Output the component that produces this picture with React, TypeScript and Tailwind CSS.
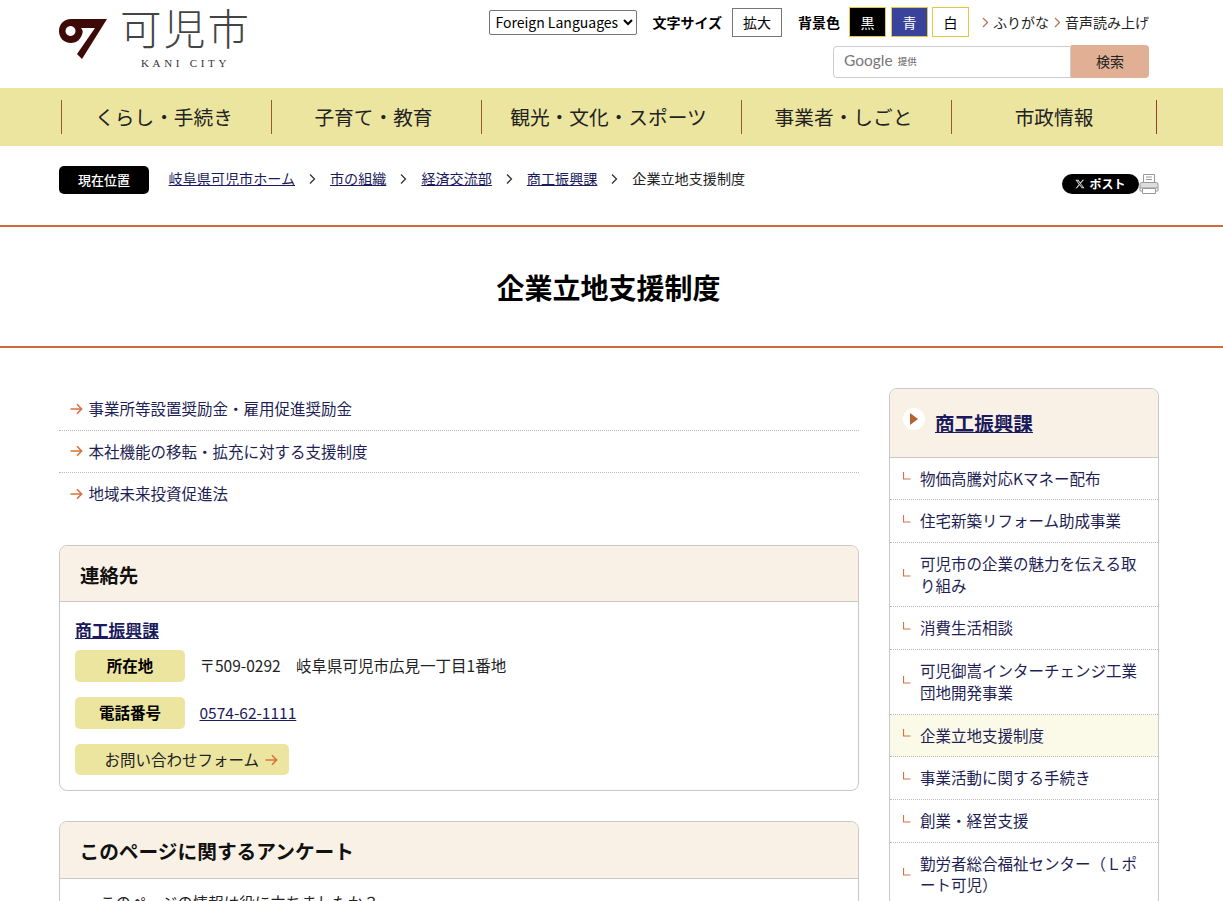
import React from 'react';

const jp = "font-['Noto_Sans_CJK_JP','Noto_Sans',sans-serif]";

const navItems = [
  { label: 'くらし・手続き', width: 'w-[210px] pr-[5px]' },
  { label: '子育て・教育', width: 'w-[210px] pr-[6px]' },
  { label: '観光・文化・スポーツ', width: 'w-[260px] pr-[6px]' },
  { label: '事業者・しごと', width: 'w-[210px] pr-[6px]' },
  { label: '市政情報', width: 'w-[205px]' },
];

const crumbs = ['岐阜県可児市ホーム', '市の組織', '経済交流部', '商工振興課'];

const mainLinks = ['事業所等設置奨励金・雇用促進奨励金', '本社機能の移転・拡充に対する支援制度', '地域未来投資促進法'];

const sideLinks = [
  '物価高騰対応Kマネー配布',
  '住宅新築リフォーム助成事業',
  '可児市の企業の魅力を伝える取り組み',
  '消費生活相談',
  '可児御嵩インターチェンジ工業団地開発事業',
  '企業立地支援制度',
  '事業活動に関する手続き',
  '創業・経営支援',
  '勤労者総合福祉センター（Ｌポート可児）',
];

const Arrow = () => (
  <svg width="13" height="12" viewBox="0 0 13 12" fill="none" stroke="#d9703f" strokeWidth="1.6" className="shrink-0">
    <path d="M0.5 6h11M7 1.2 11.6 6 7 10.8" />
  </svg>
);

const Chevron = () => (
  <svg width="7" height="12" viewBox="0 0 7 12" fill="none" stroke="#333" strokeWidth="1.3" className="shrink-0">
    <path d="M1 1.5 5.5 6 1 10.5" />
  </svg>
);

const SmallChevron = () => (
  <svg width="7" height="11" viewBox="0 0 7 11" fill="none" stroke="#b5714a" strokeWidth="1.2" className="shrink-0">
    <path d="M1 1 5.5 5.5 1 10" />
  </svg>
);

const Logo = () => (
  <div className="flex items-start">
    <svg width="48" height="40" viewBox="0 0 48 40" className="mt-[19px] shrink-0">
      <path
        fill="#3d0a08"
        fillRule="evenodd"
        d="M12 0H48L23 40L18 35L36 9H22C23.500 11 24 12 23.500 14C22 20 18 24 12 24C5 24 0 19 0 12C0 5 5 0 12 0ZM11.500 7a5 5 0 1 0 .01 0Z"
      />
    </svg>
    <div className="ml-[13px] flex flex-col items-center pt-[3px]">
      <div className={`${jp} h-[49px] text-[41.5px] leading-[49px] font-light tracking-[2.2px] whitespace-nowrap text-[#444]`}>可児市</div>
      <div className="mt-[5px] font-['Liberation_Serif',serif] text-[11px] leading-[12px] tracking-[3.7px] whitespace-nowrap text-[#333]">KANI CITY</div>
    </div>
  </div>
);

const Header = () => (
  <header className="ml-[59px] flex h-[88px] w-[1100px] justify-between">
    <Logo />
    <div className="flex flex-col items-end pt-[7px]">
      <div className="flex h-[30px] items-center">
        <select className="h-[25px] w-[148px] rounded-[2px] border border-[#767676] bg-white pl-[1px] text-[14px] text-black">
          <option>Foreign Languages</option>
        </select>
        <span className="ml-[15px] text-[14px] font-bold">文字サイズ</span>
        <span className="ml-[10px] flex h-[29px] w-[50px] items-center justify-center border border-[#767676] text-[14px]">拡大</span>
        <span className="ml-[16px] text-[14px] font-bold">背景色</span>
        <span className="ml-[9px] flex h-[30px] w-[37px] items-center justify-center border border-[#e2c93f] bg-black text-[14px] text-white">黒</span>
        <span className="ml-[5px] flex h-[30px] w-[37px] items-center justify-center border border-[#e2c93f] bg-[#3a439b] text-[14px] text-white">青</span>
        <span className="ml-[4px] flex h-[30px] w-[37px] items-center justify-center border border-[#e2c93f] bg-white text-[14px]">白</span>
        <span className="ml-[13px] flex items-center gap-[4px] text-[14px] text-[#222]">
          <SmallChevron />ふりがな
        </span>
        <span className="ml-[5px] mr-[10px] flex items-center gap-[4px] text-[14px] text-[#222]">
          <SmallChevron />音声読み上げ
        </span>
      </div>
      <div className="mt-[8px] mr-[10px] flex h-[33px]">
        <div className="flex h-[32px] w-[238px] translate-y-[1px] items-center rounded-l-[4px] border border-[#ccc] pb-[2px] pl-[10px]">
          <span className="font-['Lato',sans-serif] text-[15.5px] text-[#777]">Google</span>
          <span className="ml-[5px] text-[9.5px] font-medium text-[#777]">提供</span>
        </div>
        <div className="flex w-[78px] items-center justify-center rounded-r-[4px] bg-[#e1b094] text-[14px] text-[#222]">検索</div>
      </div>
    </div>
  </header>
);

const Nav = () => (
  <nav className="h-[58px] bg-[#ece5a0]">
    <div className="ml-[59px] flex h-full w-[1100px] items-center pl-[2px]">
      {navItems.map((item) => (
        <div
          key={item.label}
          className={`${item.width} flex h-[34px] items-center justify-center border-l border-[#9b5a2e] text-[19.7px] text-[#222]`}
        >
          {item.label}
        </div>
      ))}
      <div className="h-[34px] border-l border-[#9b3a2e]" />
    </div>
  </nav>
);

const Breadcrumb = () => (
  <div className="ml-[59px] flex h-[79px] w-[1100px] items-start justify-between pt-[20px]">
    <div className="flex items-center">
      <span className="flex h-[28px] w-[90px] items-center justify-center rounded-[5px] bg-black text-[13px] font-medium text-white">現在位置</span>
      <div className="ml-[19.6px] flex items-center gap-[14px] pb-[2px] text-[14.1px]">
        {crumbs.map((c) => (
          <React.Fragment key={c}>
            <a className="text-[#1a1a5c] underline">{c}</a>
            <Chevron />
          </React.Fragment>
        ))}
        <span className="text-[#222]">企業立地支援制度</span>
      </div>
    </div>
    <div className="flex items-center pt-[6px]">
      <span className="flex h-[20px] w-[77px] items-center justify-center gap-[4px] rounded-full bg-black text-[12px] font-bold text-white">
        <svg width="10" height="10" viewBox="0 0 24 24" fill="#ddd">
          <path d="M18.200 2h3.400l-7.400 8.500L23 22h-6.800l-5.300-7-6.100 7H1.300l7.900-9L1 2h7l4.800 6.400L18.200 2Zm-1.200 18h1.900L7 3.900H5L17 20Z" />
        </svg>
        ポスト
      </span>
      <svg width="20" height="22" viewBox="0 0 20 22" fill="none" stroke="#999" strokeWidth="1" className="mt-[1px]">
        <path d="M4.500 9.500V1.500H15.500V9.500M7 4h6M7 6.500h6" />
        <path fill="#ddd" d="M1 15V11q0-1.500 1.500-1.500h15Q19 9.500 19 11V15Z" />
        <path d="M1 15V18H3.500M19 15V18H16.500" />
        <path d="M3.500 15.500H16.500V20.500H3.500Z" />
      </svg>
    </div>
  </div>
);

const PageTitle = () => (
  <div className="flex h-[123px] w-full items-center justify-center border-y-2 border-[#d2693a] pr-[6px]">
    <h1 className="text-[28px] leading-[40px] font-bold text-black">企業立地支援制度</h1>
  </div>
);

const ContactBox = () => (
  <section className="mt-[29px] h-[246px] rounded-[8px] border border-[#c8c8c8]">
    <h2 className="flex h-[56px] items-center rounded-t-[8px] border-b border-[#c8c8c8] bg-[#f9f1e6] pt-[3px] pl-[20px] text-[19.4px] font-bold text-[#111]">連絡先</h2>
    <div className="px-[15px] pt-[16px]">
      <a className="block text-[16.8px] leading-[24px] font-bold text-[#1a1a5c] underline">商工振興課</a>
      <div className="mt-[8px] flex items-center">
        <span className="flex h-[32px] w-[110px] items-center justify-center rounded-[5px] bg-[#ece5a0] text-[15.5px] font-bold">所在地</span>
        <span className="ml-[14.5px] text-[15.5px] text-[#222]">〒509-0292　岐阜県可児市広見一丁目1番地</span>
      </div>
      <div className="mt-[15px] flex items-center">
        <span className="flex h-[32px] w-[110px] items-center justify-center rounded-[5px] bg-[#ece5a0] text-[15.5px] font-bold">電話番号</span>
        <a className="ml-[14.5px] text-[15.5px] text-[#1a1a5c] underline">0574-62-1111</a>
      </div>
      <a className="mt-[15px] flex h-[31px] w-[214px] items-center rounded-[5px] bg-[#ece5a0] pt-[1px] pl-[29.5px] text-[15.5px] text-[#222]">
        お問い合わせフォーム
        <span className="ml-[6px]"><Arrow /></span>
      </a>
    </div>
  </section>
);

const Survey = () => (
  <section className="mt-[30px] rounded-[8px] border border-[#c8c8c8]">
    <h2 className="flex h-[57px] items-center rounded-t-[8px] border-b border-[#c8c8c8] bg-[#f9f1e6] pt-[2px] pl-[19.5px] text-[19.7px] font-bold text-[#111]">このページに関するアンケート</h2>
    <p className="pt-[12px] pl-[40px] text-[15.5px] text-[#222]">このページの情報は役に立ちましたか？</p>
  </section>
);

const Sidebar = () => (
  <aside className="w-[270px] self-start rounded-[8px] border border-[#c8c8c8]">
    <div className="flex h-[68.6px] items-center rounded-t-[8px] border-b border-[#c8c8c8] bg-[#f9f1e6] pl-[13px]">
      <span className="mb-[8px] flex h-[22px] w-[22px] items-center justify-center rounded-full bg-white">
        <svg width="8" height="12" viewBox="0 0 8 12" fill="#b5602f">
          <path d="M0 0 8 6 0 12Z" />
        </svg>
      </span>
      <a className="ml-[10px] text-[19.6px] font-bold text-[#1a1a5c] underline">商工振興課</a>
    </div>
    {sideLinks.map((s, i) => (
      <div
        key={s}
        className={`flex items-center py-[10px] pr-[20px] pl-[13px] ${i === 5 ? 'bg-[#fbf9e8]' : ''} ${i < sideLinks.length - 1 ? 'border-b border-dotted border-[#bbb]' : ''}`}
      >
        <svg width="8" height="8" viewBox="0 0 8 8" fill="none" stroke="#d9703f" strokeWidth="1.2" className="mb-[4px] shrink-0">
          <path d="M0.500 0V7H7.500" />
        </svg>
        <span className="ml-[9px] text-[15.5px] leading-[21.7px] text-[#1f1f55]">{s}</span>
      </div>
    ))}
  </aside>
);

export default function App() {
  return (
    <div className={`${jp} h-[901px] overflow-hidden bg-white text-black`}>
      <Header />
      <Nav />
      <Breadcrumb />
      <PageTitle />
      <div className="mt-[40px] ml-[59px] flex w-[1100px] justify-between">
        <main className="w-[800px]">
          <ul>
            {mainLinks.map((l, i) => (
              <li
                key={l}
                className={`flex h-[42.500px] items-center gap-[5.6px] pl-[11px] text-[15.5px] text-[#1f1f55] ${i < 2 ? 'border-b border-dotted border-[#bbb]' : 'pb-[1px]'}`}
              >
                <Arrow />
                {l}
              </li>
            ))}
          </ul>
          <ContactBox />
          <Survey />
        </main>
        <Sidebar />
      </div>
    </div>
  );
}
